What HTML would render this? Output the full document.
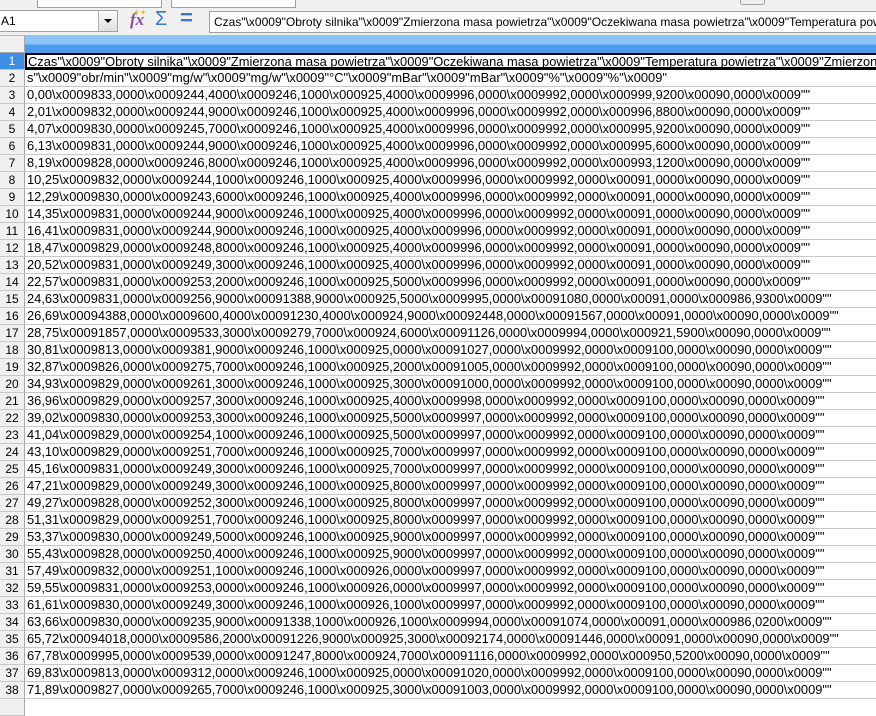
<!DOCTYPE html>
<html><head><meta charset="utf-8"><style>
*{margin:0;padding:0;box-sizing:border-box}
body{width:876px;height:703px;overflow:hidden;background:#fff;font-family:"Liberation Sans",Arial,sans-serif;position:relative}
.tb{position:absolute;left:0;top:0;width:876px;height:36px;background:#f0f0f0;border-bottom:1px solid #b8b8b8}
.box{position:absolute;background:#fff;border:1px solid #a0a0a0}
.hdr{position:absolute;left:25px;top:36px;width:851px;height:17px;background:linear-gradient(#8cc4f8 0,#8cc4f8 47%,#4a9cec 53%,#4a9cec 100%)}
.corner{position:absolute;left:0;top:36px;width:25px;height:17px;background:#f0f0f0;border-right:1px solid #a8a8a8;border-bottom:1px solid #a8a8a8}
.rh{position:absolute;left:0;width:25px;height:17px;background:#f0f0f0;border-right:1px solid #a8a8a8;border-bottom:1px solid #c8c8c8;font-size:12px;line-height:17px;text-align:center;color:#000}
.r{position:absolute;left:25px;width:851px;height:17px;border-bottom:1px solid #c8c8c8;font-size:12.88px;line-height:16px;padding-left:2px;white-space:nowrap;overflow:hidden;color:#000}
</style></head><body>
<div class="tb">
<div class="box" style="left:37px;top:-10px;width:125px;height:18px"></div>
<div class="box" style="left:171px;top:-10px;width:125px;height:18px"></div>
<div class="box" style="left:740px;top:-10px;width:25px;height:15px;border-radius:3px;background:#eee"></div>
<div class="box" style="left:-2px;top:10px;width:120px;height:22px;font-size:12px;line-height:20px;padding-left:2px">A1</div>
<div style="position:absolute;left:98px;top:11px;width:19px;height:20px;background:linear-gradient(#fafafa,#e0e0e0);border-left:1px solid #b0b0b0"><div style="position:absolute;left:5px;top:8px;border-left:4px solid transparent;border-right:4px solid transparent;border-top:4px solid #000"></div></div>
<div style="position:absolute;left:130px;top:10px;font:italic bold 17px 'Liberation Serif',serif;color:#8a4f9c">fx</div>
<div style="position:absolute;left:133px;top:8px;font-size:8px;color:#e0c020">✦✦</div>
<div style="position:absolute;left:155px;top:9px;font-size:20px;line-height:20px;color:#3c78c0">Σ</div>
<div style="position:absolute;left:180px;top:8px;font-size:22px;line-height:20px;font-weight:bold;color:#3c78c0">=</div>
<div class="box" style="left:209px;top:11px;width:670px;height:22px;font-size:12px;line-height:20px;padding-left:4px;white-space:nowrap;overflow:hidden">Czas"\x0009"Obroty silnika"\x0009"Zmierzona masa powietrza"\x0009"Oczekiwana masa powietrza"\x0009"Temperatura powietrza"\x0009"Zmierzona</div>
</div>
<div class="corner"></div>
<div class="hdr"></div>

<div class="rh" style="top:53px;background:#3d8ee6;color:#fff">1</div>
<div class="r" style="top:53px;width:860px;border:2px solid #000;border-bottom:3px solid #000;line-height:13px;padding-left:1px">Czas"\x0009"Obroty silnika"\x0009"Zmierzona masa powietrza"\x0009"Oczekiwana masa powietrza"\x0009"Temperatura powietrza"\x0009"Zmierzona</div>
<div class="rh" style="top:70px">2</div><div class="r" style="top:70px">s"\x0009"obr/min"\x0009"mg/w"\x0009"mg/w"\x0009"°C"\x0009"mBar"\x0009"mBar"\x0009"%"\x0009"%"\x0009"</div>
<div class="rh" style="top:87px">3</div><div class="r" style="top:87px">0,00\x0009833,0000\x0009244,4000\x0009246,1000\x000925,4000\x0009996,0000\x0009992,0000\x000999,9200\x00090,0000\x0009""</div>
<div class="rh" style="top:104px">4</div><div class="r" style="top:104px">2,01\x0009832,0000\x0009244,9000\x0009246,1000\x000925,4000\x0009996,0000\x0009992,0000\x000996,8800\x00090,0000\x0009""</div>
<div class="rh" style="top:121px">5</div><div class="r" style="top:121px">4,07\x0009830,0000\x0009245,7000\x0009246,1000\x000925,4000\x0009996,0000\x0009992,0000\x000995,9200\x00090,0000\x0009""</div>
<div class="rh" style="top:138px">6</div><div class="r" style="top:138px">6,13\x0009831,0000\x0009244,9000\x0009246,1000\x000925,4000\x0009996,0000\x0009992,0000\x000995,6000\x00090,0000\x0009""</div>
<div class="rh" style="top:155px">7</div><div class="r" style="top:155px">8,19\x0009828,0000\x0009246,8000\x0009246,1000\x000925,4000\x0009996,0000\x0009992,0000\x000993,1200\x00090,0000\x0009""</div>
<div class="rh" style="top:172px">8</div><div class="r" style="top:172px">10,25\x0009832,0000\x0009244,1000\x0009246,1000\x000925,4000\x0009996,0000\x0009992,0000\x00091,0000\x00090,0000\x0009""</div>
<div class="rh" style="top:189px">9</div><div class="r" style="top:189px">12,29\x0009830,0000\x0009243,6000\x0009246,1000\x000925,4000\x0009996,0000\x0009992,0000\x00091,0000\x00090,0000\x0009""</div>
<div class="rh" style="top:206px">10</div><div class="r" style="top:206px">14,35\x0009831,0000\x0009244,9000\x0009246,1000\x000925,4000\x0009996,0000\x0009992,0000\x00091,0000\x00090,0000\x0009""</div>
<div class="rh" style="top:223px">11</div><div class="r" style="top:223px">16,41\x0009831,0000\x0009244,9000\x0009246,1000\x000925,4000\x0009996,0000\x0009992,0000\x00091,0000\x00090,0000\x0009""</div>
<div class="rh" style="top:240px">12</div><div class="r" style="top:240px">18,47\x0009829,0000\x0009248,8000\x0009246,1000\x000925,4000\x0009996,0000\x0009992,0000\x00091,0000\x00090,0000\x0009""</div>
<div class="rh" style="top:257px">13</div><div class="r" style="top:257px">20,52\x0009831,0000\x0009249,3000\x0009246,1000\x000925,4000\x0009996,0000\x0009992,0000\x00091,0000\x00090,0000\x0009""</div>
<div class="rh" style="top:274px">14</div><div class="r" style="top:274px">22,57\x0009831,0000\x0009253,2000\x0009246,1000\x000925,5000\x0009996,0000\x0009992,0000\x00091,0000\x00090,0000\x0009""</div>
<div class="rh" style="top:291px">15</div><div class="r" style="top:291px">24,63\x0009831,0000\x0009256,9000\x00091388,9000\x000925,5000\x0009995,0000\x00091080,0000\x00091,0000\x000986,9300\x0009""</div>
<div class="rh" style="top:308px">16</div><div class="r" style="top:308px">26,69\x00094388,0000\x0009600,4000\x00091230,4000\x000924,9000\x00092448,0000\x00091567,0000\x00091,0000\x00090,0000\x0009""</div>
<div class="rh" style="top:325px">17</div><div class="r" style="top:325px">28,75\x00091857,0000\x0009533,3000\x0009279,7000\x000924,6000\x00091126,0000\x0009994,0000\x000921,5900\x00090,0000\x0009""</div>
<div class="rh" style="top:342px">18</div><div class="r" style="top:342px">30,81\x0009813,0000\x0009381,9000\x0009246,1000\x000925,0000\x00091027,0000\x0009992,0000\x0009100,0000\x00090,0000\x0009""</div>
<div class="rh" style="top:359px">19</div><div class="r" style="top:359px">32,87\x0009826,0000\x0009275,7000\x0009246,1000\x000925,2000\x00091005,0000\x0009992,0000\x0009100,0000\x00090,0000\x0009""</div>
<div class="rh" style="top:376px">20</div><div class="r" style="top:376px">34,93\x0009829,0000\x0009261,3000\x0009246,1000\x000925,3000\x00091000,0000\x0009992,0000\x0009100,0000\x00090,0000\x0009""</div>
<div class="rh" style="top:393px">21</div><div class="r" style="top:393px">36,96\x0009829,0000\x0009257,3000\x0009246,1000\x000925,4000\x0009998,0000\x0009992,0000\x0009100,0000\x00090,0000\x0009""</div>
<div class="rh" style="top:410px">22</div><div class="r" style="top:410px">39,02\x0009830,0000\x0009253,3000\x0009246,1000\x000925,5000\x0009997,0000\x0009992,0000\x0009100,0000\x00090,0000\x0009""</div>
<div class="rh" style="top:427px">23</div><div class="r" style="top:427px">41,04\x0009829,0000\x0009254,1000\x0009246,1000\x000925,5000\x0009997,0000\x0009992,0000\x0009100,0000\x00090,0000\x0009""</div>
<div class="rh" style="top:444px">24</div><div class="r" style="top:444px">43,10\x0009829,0000\x0009251,7000\x0009246,1000\x000925,7000\x0009997,0000\x0009992,0000\x0009100,0000\x00090,0000\x0009""</div>
<div class="rh" style="top:461px">25</div><div class="r" style="top:461px">45,16\x0009831,0000\x0009249,3000\x0009246,1000\x000925,7000\x0009997,0000\x0009992,0000\x0009100,0000\x00090,0000\x0009""</div>
<div class="rh" style="top:478px">26</div><div class="r" style="top:478px">47,21\x0009829,0000\x0009249,3000\x0009246,1000\x000925,8000\x0009997,0000\x0009992,0000\x0009100,0000\x00090,0000\x0009""</div>
<div class="rh" style="top:495px">27</div><div class="r" style="top:495px">49,27\x0009828,0000\x0009252,3000\x0009246,1000\x000925,8000\x0009997,0000\x0009992,0000\x0009100,0000\x00090,0000\x0009""</div>
<div class="rh" style="top:512px">28</div><div class="r" style="top:512px">51,31\x0009829,0000\x0009251,7000\x0009246,1000\x000925,8000\x0009997,0000\x0009992,0000\x0009100,0000\x00090,0000\x0009""</div>
<div class="rh" style="top:529px">29</div><div class="r" style="top:529px">53,37\x0009830,0000\x0009249,5000\x0009246,1000\x000925,9000\x0009997,0000\x0009992,0000\x0009100,0000\x00090,0000\x0009""</div>
<div class="rh" style="top:546px">30</div><div class="r" style="top:546px">55,43\x0009828,0000\x0009250,4000\x0009246,1000\x000925,9000\x0009997,0000\x0009992,0000\x0009100,0000\x00090,0000\x0009""</div>
<div class="rh" style="top:563px">31</div><div class="r" style="top:563px">57,49\x0009832,0000\x0009251,1000\x0009246,1000\x000926,0000\x0009997,0000\x0009992,0000\x0009100,0000\x00090,0000\x0009""</div>
<div class="rh" style="top:580px">32</div><div class="r" style="top:580px">59,55\x0009831,0000\x0009253,0000\x0009246,1000\x000926,0000\x0009997,0000\x0009992,0000\x0009100,0000\x00090,0000\x0009""</div>
<div class="rh" style="top:597px">33</div><div class="r" style="top:597px">61,61\x0009830,0000\x0009249,3000\x0009246,1000\x000926,1000\x0009997,0000\x0009992,0000\x0009100,0000\x00090,0000\x0009""</div>
<div class="rh" style="top:614px">34</div><div class="r" style="top:614px">63,66\x0009830,0000\x0009235,9000\x00091338,1000\x000926,1000\x0009994,0000\x00091074,0000\x00091,0000\x000986,0200\x0009""</div>
<div class="rh" style="top:631px">35</div><div class="r" style="top:631px">65,72\x00094018,0000\x0009586,2000\x00091226,9000\x000925,3000\x00092174,0000\x00091446,0000\x00091,0000\x00090,0000\x0009""</div>
<div class="rh" style="top:648px">36</div><div class="r" style="top:648px">67,78\x0009995,0000\x0009539,0000\x00091247,8000\x000924,7000\x00091116,0000\x0009992,0000\x000950,5200\x00090,0000\x0009""</div>
<div class="rh" style="top:665px">37</div><div class="r" style="top:665px">69,83\x0009813,0000\x0009312,0000\x0009246,1000\x000925,0000\x00091020,0000\x0009992,0000\x0009100,0000\x00090,0000\x0009""</div>
<div class="rh" style="top:682px">38</div><div class="r" style="top:682px">71,89\x0009827,0000\x0009265,7000\x0009246,1000\x000925,3000\x00091003,0000\x0009992,0000\x0009100,0000\x00090,0000\x0009""</div>
<div class="rh" style="top:699px"></div>
</body></html>
